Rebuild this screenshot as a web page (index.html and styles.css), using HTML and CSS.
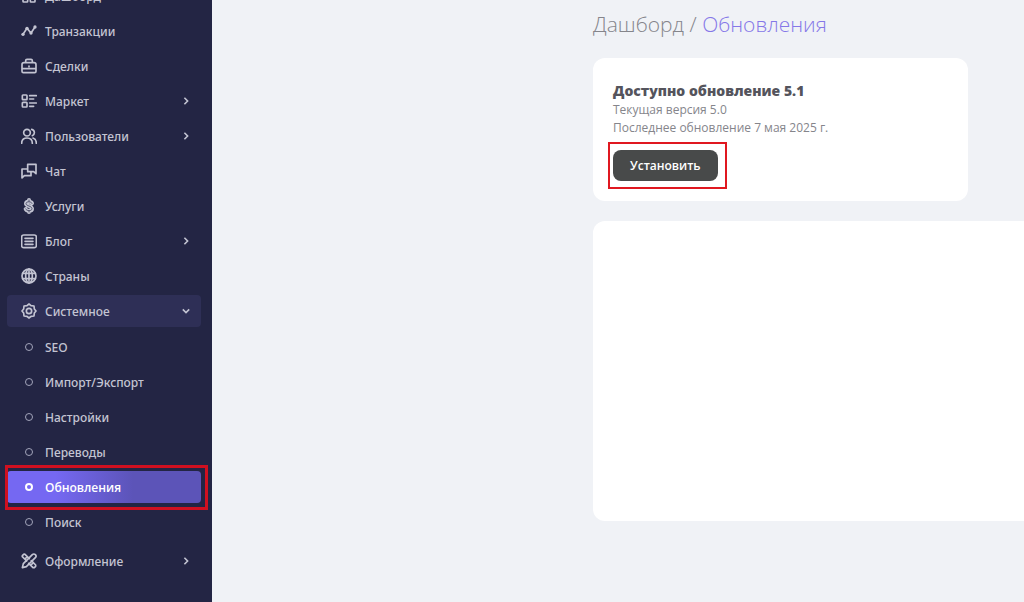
FILE: index.html
```html
<!DOCTYPE html>
<html lang="ru">
<head>
  <meta charset="UTF-8">
  <meta name="viewport" content="width=device-width, initial-scale=1.0">
  <title>Обновления</title>
  <link rel="stylesheet" href="styles.css">
</head>
<body>
  <div class="layout">
    <!-- Sidebar -->
    <aside class="sidebar">
      <nav>
        <ul class="menu">
          <li><a class="menu-link" href="#">
            <svg class="icon" viewBox="0 0 24 24"><rect x="3" y="3" width="7" height="7" rx="1"/><rect x="14" y="3" width="7" height="7" rx="1"/><rect x="3" y="14" width="7" height="7" rx="1"/><rect x="14" y="14" width="7" height="7" rx="1"/></svg>
            <span>Дашборд</span>
          </a></li>
          <li><a class="menu-link" href="#">
            <svg class="icon" viewBox="0 0 24 24"><path d="M3 17L9 8l6 7 6-9"/><g class="fill"><circle cx="3" cy="17" r="2.500"/><circle cx="9" cy="8" r="2.500"/><circle cx="15" cy="15" r="2.500"/><circle cx="21" cy="6" r="2.500"/></g></svg>
            <span>Транзакции</span>
          </a></li>
          <li><a class="menu-link" href="#">
            <svg class="icon" viewBox="0 0 24 24"><path d="M1.500 10a3 3 0 0 1 3-3h15a3 3 0 0 1 3 3v10a2 2 0 0 1-2 2h-17a2 2 0 0 1-2-2zM7 7V4a2 2 0 0 1 2-2h6a2 2 0 0 1 2 2v3M2 16h20M12 12v1"/></svg>
            <span>Сделки</span>
          </a></li>
          <li><a class="menu-link" href="#">
            <svg class="icon" viewBox="0 0 24 24"><rect x="2" y="3" width="7" height="7" rx="1"/><rect x="2" y="14" width="7" height="7" rx="1"/><path d="M13 4h10M13 9h6M13 15h10M13 20h6"/></svg>
            <span>Маркет</span>
            <svg class="arrow" viewBox="0 0 10 10"><path d="M3 1l4 4-4 4"/></svg>
          </a></li>
          <li><a class="menu-link" href="#">
            <svg class="icon" viewBox="0 0 24 24"><circle cx="9" cy="7" r="5"/><path d="M1 23c0-5 3-8 8-8s8 3 8 8M16 2a5 5 0 0 1 1 9.500M18 15c3 1 5 4 5 8"/></svg>
            <span>Пользователи</span>
            <svg class="arrow" viewBox="0 0 10 10"><path d="M3 1l4 4-4 4"/></svg>
          </a></li>
          <li><a class="menu-link" href="#">
            <svg class="icon" viewBox="0 0 24 24"><path d="M10 2h12.500v14L19 13h-9zM10 9H1.500v13.500L5 19h10v-6"/></svg>
            <span>Чат</span>
          </a></li>
          <li><a class="menu-link" href="#">
            <svg class="icon" viewBox="0 0 24 24"><path class="dollar" d="M16.500 8c-1.500-3.500-9-3-9 .5s9 3.500 9 7.500-8 4-9.500.5M12 3v2M12 19v2"/><path class="dollar-core" d="M16.500 8c-1.500-3.500-9-3-9 .5s9 3.500 9 7.500-8 4-9.500.5M12 3v2M12 19v2"/></svg>
            <span>Услуги</span>
          </a></li>
          <li><a class="menu-link" href="#">
            <svg class="icon" viewBox="0 0 24 24"><rect x="1" y="3" width="22" height="19" rx="3"/><path d="M6 8h12M6 12.500h12M6 17h12"/></svg>
            <span>Блог</span>
            <svg class="arrow" viewBox="0 0 10 10"><path d="M3 1l4 4-4 4"/></svg>
          </a></li>
          <li><a class="menu-link" href="#">
            <svg class="icon" viewBox="0 0 24 24"><circle cx="12" cy="12" r="10.500"/><ellipse cx="12" cy="12" rx="5" ry="10.500"/><path d="M2.500 8h19M2.500 16h19M12 1.500v21"/></svg>
            <span>Страны</span>
          </a></li>
          <li>
            <a class="menu-link open" href="#">
              <svg class="icon" viewBox="0 0 24 24"><path d="M12 1.500l3 2.500 4.500.5.5 4.500 2.500 3-2.500 3-.5 4.500-4.500.5-3 2.500L9 20l-4.500-.5L4 15l-2.500-3L4 9l.5-4.500L9 4z"/><circle cx="12" cy="12" r="4"/></svg>
              <span>Системное</span>
              <svg class="arrow" viewBox="0 0 10 10"><path d="M1 3l4 4 4-4"/></svg>
            </a>
            <ul class="submenu">
              <li><a class="menu-link" href="#"><i class="dot"></i><span>SEO</span></a></li>
              <li><a class="menu-link" href="#"><i class="dot"></i><span>Импорт/Экспорт</span></a></li>
              <li><a class="menu-link" href="#"><i class="dot"></i><span>Настройки</span></a></li>
              <li><a class="menu-link" href="#"><i class="dot"></i><span>Переводы</span></a></li>
              <li class="marked marked-menu"><a class="menu-link active" href="#"><i class="dot"></i><span>Обновления</span></a></li>
              <li><a class="menu-link" href="#"><i class="dot"></i><span>Поиск</span></a></li>
            </ul>
          </li>
          <li><a class="menu-link" href="#">
            <svg class="icon" viewBox="0 0 24 24"><path d="M8.500 12L2 5.500a2.500 2.500 0 0 1 0-1.500l2-2a2.500 2.500 0 0 1 2 0L12.500 8.500M15.500 11.500L22 18v2l-2 2h-2l-6.500-6.500M6 9l2-2M15 18l2-2M2 22l1.500-6L17 2.500a2.500 2.500 0 0 1 4.500 4.500L8 20.500z"/></svg>
            <span>Оформление</span>
            <svg class="arrow" viewBox="0 0 10 10"><path d="M3 1l4 4-4 4"/></svg>
          </a></li>
        </ul>
      </nav>
    </aside>

    <!-- Content -->
    <main class="content">
      <h1 class="breadcrumb"><a href="#">Дашборд</a> / <span>Обновления</span></h1>

      <section class="card update-card">
        <h2>Доступно обновление 5.1</h2>
        <p>Текущая версия 5.0</p>
        <p>Последнее обновление 7 мая 2025 г.</p>
        <div class="marked marked-button">
          <button class="install" type="button">Установить</button>
        </div>
      </section>

      <section class="card log-card"></section>
    </main>
  </div>
</body>
</html>
```
FILE: styles.css
```css
* {
  margin: 0;
  padding: 0;
  box-sizing: border-box;
}

body {
  font-family: 'Open Sans', 'Noto Sans', sans-serif;
  background-color: #f0f2f6;
  color: #54545c;
}

a {
  color: inherit;
  text-decoration: none;
}

ul {
  list-style: none;
}

.layout {
  display: flex;
  height: 100vh;
  overflow: hidden;
}

/* Sidebar */
.sidebar {
  flex: 0 0 212px;
  padding: 0 11px 0 7px;
  background-color: #232544;
}

/* the list is scrolled down a little */
.menu {
  margin-top: -20px;
}

.menu,
.submenu {
  display: flex;
  flex-direction: column;
  gap: 3px;
}

.submenu {
  margin: 4px 0;
}

.menu-link {
  display: flex;
  align-items: center;
  gap: 8px;
  height: 32px;
  padding: 0 11px 0 14px;
  border-radius: 4px;
  font-family: 'Noto Sans', 'Open Sans', sans-serif;
  font-size: 12px;
  font-weight: 500;
  color: #c3c4d2;
}

.menu-link.open {
  background-color: #2e2f56;
}

.menu-link.active {
  background: linear-gradient(90deg, #7568f2 25%, #5c54b8 65%);
  font-family: 'Open Sans', 'Noto Sans', sans-serif;
  font-weight: 600;
  color: #fff;
}

.icon {
  width: 16px;
  height: 16px;
  fill: none;
  stroke: currentColor;
  stroke-width: 2.5;
  stroke-linecap: round;
  stroke-linejoin: round;
}

.icon .fill {
  fill: currentColor;
  stroke: none;
}

.icon .dollar {
  stroke-width: 6;
}

.icon .dollar-core {
  stroke: #232544;
  stroke-width: 1;
}

.arrow {
  width: 8px;
  height: 8px;
  margin-left: auto;
  fill: none;
  stroke: currentColor;
  stroke-width: 2;
}

.dot {
  width: 8px;
  height: 8px;
  margin: 0 4px;
  border: 1px solid #a2a4ba;
  border-radius: 50%;
}

.active .dot {
  border: 2px solid #fff;
}

/* Red frames */
.marked {
  position: relative;
}

.marked::after {
  content: '';
  position: absolute;
  pointer-events: none;
}

.marked-menu::after {
  inset: -6px -7px -7px -2px;
  border: 3px solid #d01020;
}

.marked-button::after {
  inset: -8px -9px -8px -5px;
  border: 2px solid #e01820;
}

/* Content */
.content {
  flex: 1;
  min-width: 0;
  padding: 8px 0 0 381px;
}

.breadcrumb {
  margin-bottom: 18px;
  font-size: 21px;
  font-weight: 300;
  line-height: 32px;
  color: #85858b;
}

.breadcrumb span {
  color: #8577e8;
}

.card {
  background-color: #fff;
  border-radius: 12px;
}

.update-card {
  max-width: 375px;
  margin-bottom: 20px;
  padding: 22px 20px 20px;
}

.update-card h2 {
  font-size: 14px;
  font-weight: 800;
  line-height: 21px;
}

.update-card p {
  font-size: 12px;
  line-height: 18px;
  color: #85858b;
}

.marked-button {
  width: fit-content;
  margin-top: 13px;
}

.install {
  display: block;
  height: 31px;
  padding: 0 17px;
  border: none;
  border-radius: 8px;
  background-color: #484a4a;
  font-family: inherit;
  font-size: 12px;
  font-weight: 600;
  color: #fff;
  cursor: pointer;
}

.log-card {
  height: 300px;
  border-radius: 12px 0 0 12px;
}
```
